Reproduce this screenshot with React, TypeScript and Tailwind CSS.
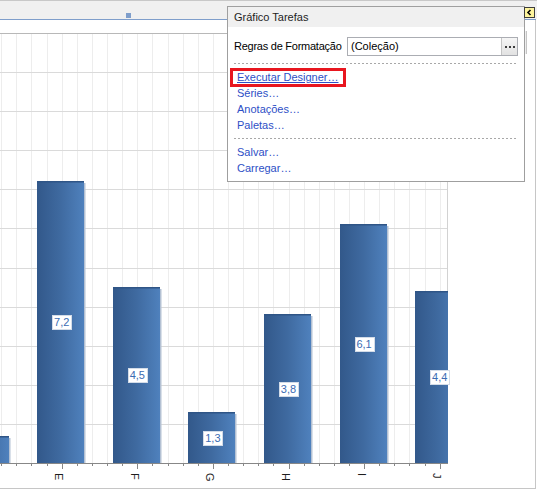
import React from "react";

const CAT0 = 61.7; // x of category E
const CAT_STEP = 75.6;
const UNIT = 39.1;
const AXIS_Y = 463;
const PLOT_R = 448;

const bars = [
  { name: "D", v: 0.7, i: -1, label: false },
  { name: "E", v: 7.2, i: 0, label: true },
  { name: "F", v: 4.5, i: 1, label: true },
  { name: "G", v: 1.3, i: 2, label: true },
  { name: "H", v: 3.8, i: 3, label: true },
  { name: "I", v: 6.1, i: 4, label: true },
  { name: "J", v: 4.4, i: 5, label: true },
];

function Chart() {
  const ticks: number[] = [];
  for (let j = -4; j <= 25; j++) ticks.push(CAT0 + j * 15.12);
  const hLines: number[] = [];
  for (let k = 1; k <= 10; k++) hLines.push(Math.round(AXIS_Y - k * UNIT) + 0.5);

  return (
    <svg width={535} height={468} viewBox="0 20 535 468" className="block">
      <defs>
        <linearGradient id="barGrad" x1="0" y1="0" x2="1" y2="0">
          <stop offset="0" stopColor="#32588a" />
          <stop offset="0.5" stopColor="#3f6aa0" />
          <stop offset="1" stopColor="#4f81bd" />
        </linearGradient>
        <clipPath id="plotClip">
          <rect x={0} y={33} width={PLOT_R} height={AXIS_Y - 33} />
        </clipPath>
      </defs>

      {ticks.map((t, idx) => (
        <line
          key={"v" + idx}
          x1={Math.round(t) + 0.5}
          x2={Math.round(t) + 0.5}
          y1={34}
          y2={AXIS_Y}
          stroke="#ededed"
          strokeWidth={1}
        />
      ))}
      {hLines.map((y, idx) => (
        <line key={"h" + idx} x1={0} x2={PLOT_R} y1={y} y2={y} stroke="#dadada" strokeWidth={1} />
      ))}
      <line x1={0} x2={PLOT_R} y1={33.5} y2={33.5} stroke="#b8b8b8" strokeWidth={1} />
      <line x1={PLOT_R - 0.5} x2={PLOT_R - 0.5} y1={33} y2={AXIS_Y} stroke="#d2d2d2" strokeWidth={1} />

      <g clipPath="url(#plotClip)">
        {bars.map((b) => {
          const cx = CAT0 + b.i * CAT_STEP;
          const left = Math.round(cx - 24.5);
          const top = Math.round(AXIS_Y - b.v * UNIT);
          return (
            <g key={b.name}>
              <rect x={left} y={top} width={47} height={AXIS_Y - top} fill="url(#barGrad)" />
              <rect x={left} y={top} width={47} height={1.5} fill="#2f5586" />
              <rect x={left + 47} y={top + 2} width={1.5} height={AXIS_Y - top - 2} fill="#b4c1d3" />
            </g>
          );
        })}
      </g>

      {bars
        .filter((b) => b.label)
        .map((b) => {
          const cx = CAT0 + b.i * CAT_STEP;
          const top = AXIS_Y - b.v * UNIT;
          const mid = Math.round((top + AXIS_Y) / 2);
          return (
            <g key={"l" + b.name}>
              <rect
                x={Math.round(cx - 9.5) + 0.5}
                y={mid - 7 + 0.5}
                width={19}
                height={14}
                fill="#ffffff"
                stroke="#d3dce8"
                strokeWidth={1}
              />
              <text
                x={cx}
                y={mid + 4}
                fontSize={11}
                textAnchor="middle"
                fill="#3b6cb3"
                fontFamily="'Liberation Sans', Arial, sans-serif"
              >
                {b.v.toFixed(1).replace(".", ",")}
              </text>
            </g>
          );
        })}

      <line x1={0} x2={PLOT_R} y1={AXIS_Y + 0.5} y2={AXIS_Y + 0.5} stroke="#878787" strokeWidth={1} />
      {ticks.map((t, idx) => {
        const isMajor = idx % 5 === 4;
        return (
          <line
            key={"t" + idx}
            x1={Math.round(t) + 0.5}
            x2={Math.round(t) + 0.5}
            y1={AXIS_Y + 1}
            y2={AXIS_Y + (isMajor ? 6 : 3)}
            stroke="#878787"
            strokeWidth={1}
          />
        );
      })}
      {bars
        .filter((b) => b.i >= 0)
        .map((b) => {
          const cx = CAT0 + b.i * CAT_STEP;
          return (
            <text
              key={"a" + b.name}
              transform={`translate(${cx - 6.5}, 473) rotate(90)`}
              fontSize={11}
              fill="#1e1e1e"
              fontFamily="'Liberation Sans', Arial, sans-serif"
            >
              {b.name}
            </text>
          );
        })}
    </svg>
  );
}

function Link({ children, underline }: { children: React.ReactNode; underline?: boolean }) {
  return (
    <div className={"h-[16px] leading-[16px] pl-[3px] text-[#2e4fc6] " + (underline ? "underline" : "")}>
      {children}
    </div>
  );
}

function Dashed() {
  return (
    <div className="h-px bg-[repeating-linear-gradient(to_right,#a8a8a8_0px,#a8a8a8_2px,transparent_2px,transparent_4px)]" />
  );
}

export default function App() {
  return (
    <div
      className="relative w-[537px] h-[489px] overflow-hidden bg-white text-[11px]"
      style={{ fontFamily: "'Liberation Sans', Arial, sans-serif" }}
    >
      <div className="relative h-[19px] border-t border-[#c8c8c8] bg-[#f0f0f0]">
        <div className="absolute left-[126px] top-[12px] h-[5px] w-[5px] bg-[#7f9ecb]" />
      </div>
      <div className="h-px w-[536px] bg-[#7f9ecb]" />

      <div className="h-[469px] w-[536px] border-r border-b border-[#c6c6c6]">
        <Chart />
      </div>

      <div className="absolute left-[525px] top-[31px] h-[23px] w-[2px] border-r border-[#c4c4c4] bg-[#eeeeee]" />

      <div className="absolute left-[227px] top-[6px] w-[298px] h-[176px] border border-[#9f9f9f] bg-white text-black">
        <div className="h-[20px] bg-[#f0f0f0] pl-[6px] flex items-center text-[#1e1e1e]">Gráfico Tarefas</div>
        <div className="px-[6px]">
          <div className="mt-[10px] flex h-[19px] items-center">
            <div className="w-[113px] shrink-0 whitespace-nowrap tracking-[-0.25px]">Regras de Formatação</div>
            <div className="flex h-[19px] flex-1 items-center border border-[#abadb3]">
              <div className="pl-[3px]">(Coleção)</div>
              <div className="ml-auto flex h-full w-[16px] items-center justify-center gap-[2px] border-l border-[#c5c5c5] bg-[linear-gradient(to_bottom,#f6f6f6,#e2e2e2)]">
                <div className="h-[2px] w-[2px] bg-[#3c3c3c]" />
                <div className="h-[2px] w-[2px] bg-[#3c3c3c]" />
                <div className="h-[2px] w-[2px] bg-[#3c3c3c]" />
              </div>
            </div>
          </div>
          <div className="mt-[7px]">
            <Dashed />
          </div>
          <div className="pt-[5px]">
            <Link underline>Executar Designer…</Link>
            <Link>Séries…</Link>
            <Link>Anotações…</Link>
            <Link>Paletas…</Link>
          </div>
          <div className="mt-[5px]">
            <Dashed />
          </div>
          <div className="pt-[5px]">
            <Link>Salvar…</Link>
            <Link>Carregar…</Link>
          </div>
        </div>
        <div className="absolute left-[2px] top-[61px] h-[19px] w-[116px] border-[3px] border-[#e8161f]" />
      </div>

      <div className="absolute left-[524px] top-[7px] flex h-[11px] w-[11px] items-center justify-center border border-[#3d3d3d] bg-[#fdf49c]">
        <svg width="7" height="7" viewBox="0 0 7 7">
          <polyline points="4.5,1 2,3.5 4.5,6" fill="none" stroke="#000" strokeWidth="1.6" />
        </svg>
      </div>
    </div>
  );
}
